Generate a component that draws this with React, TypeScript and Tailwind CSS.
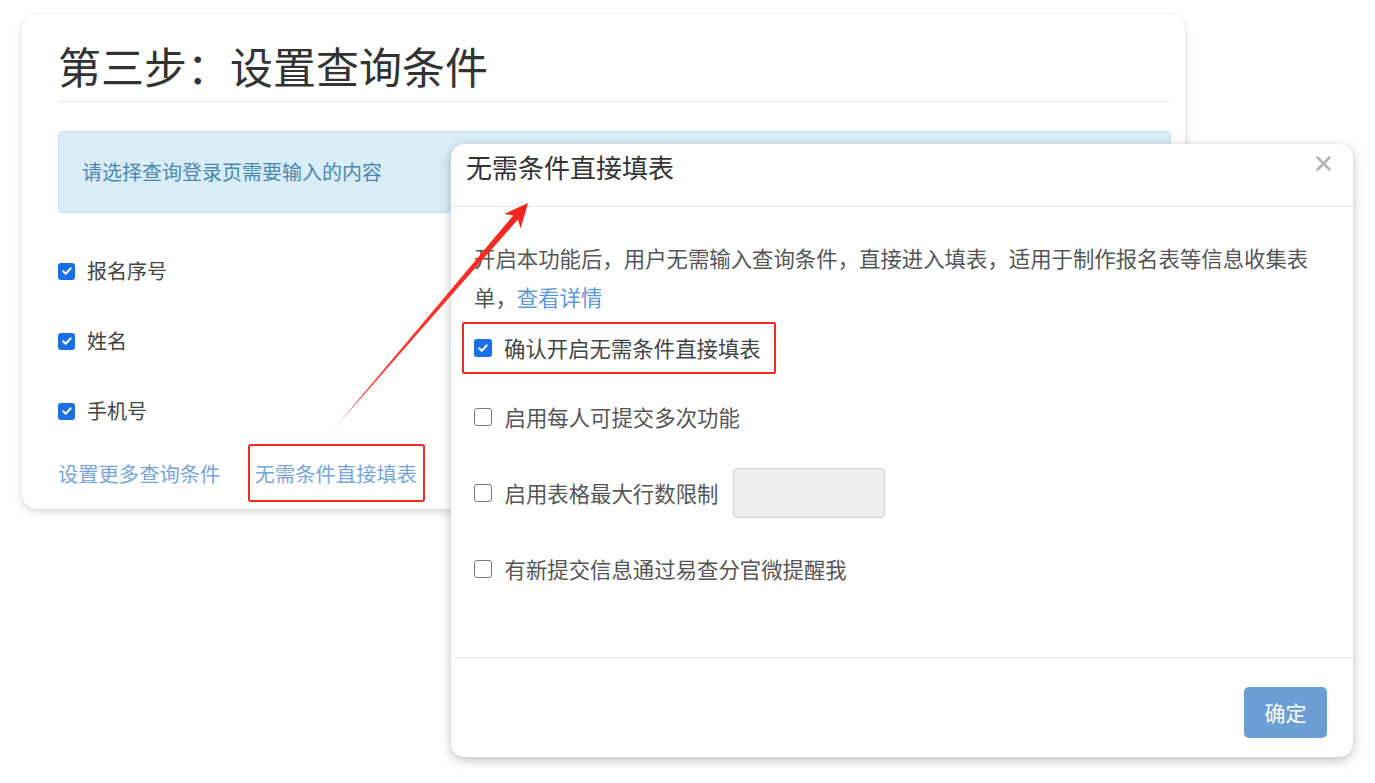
import type { ReactNode } from "react";

function Box({ checked, size = 17 }: { checked?: boolean; size?: number }) {
  const dim = size === 17 ? "h-[17px] w-[17px]" : "h-[18px] w-[18px]";
  if (checked) {
    return (
      <span className={`${dim} flex shrink-0 items-center justify-center rounded-[3px] bg-[#1b6fe4]`}>
        <svg width="12" height="12" viewBox="0 0 12 12" fill="none">
          <path d="M2.2 6.3l2.5 2.5 5-5.4" stroke="white" strokeWidth="2" strokeLinecap="round" strokeLinejoin="round" />
        </svg>
      </span>
    );
  }
  return <span className={`${dim} shrink-0 rounded-[3px] border-[1.5px] border-[#7a7a7a] bg-white`} />;
}

function Field({ label }: { label: string }) {
  return (
    <div className="flex h-[30px] items-center gap-[12px]">
      <Box checked />
      <span className="text-[20px] leading-[30px] text-[#444]">{label}</span>
    </div>
  );
}

function Option({ label, children }: { label: string; children?: ReactNode }) {
  return (
    <div className="flex items-center">
      <Box size={18} />
      <span className="ml-[12.5px] text-[21.4px] leading-[30px] text-[#555]">{label}</span>
      {children}
    </div>
  );
}

function Arrow() {
  return (
    <svg className="pointer-events-none absolute left-0 top-0" width="1375" height="783">
      <defs>
        <linearGradient id="fade" gradientUnits="userSpaceOnUse" x1="327" y1="437" x2="528" y2="203">
          <stop offset="0" stopColor="#f5221b" stopOpacity="0" />
          <stop offset="0.18" stopColor="#f5221b" stopOpacity="0.85" />
          <stop offset="1" stopColor="#f5221b" />
        </linearGradient>
      </defs>
      <polygon
        points="327,437 517.9,219.4 520.7,228.4 528,203 504.1,214 513.3,215.4"
        fill="url(#fade)"
      />
    </svg>
  );
}

export default function App() {
  return (
    <div className="relative h-[783px] w-[1375px] overflow-hidden bg-white font-['Noto_Sans_CJK_SC',sans-serif]">
      <div className="pl-[22px] pt-[14px]">
        <section className="h-[495px] w-[1163px] rounded-[16px] bg-white pl-[36px] pr-[14px] pt-[21px] shadow-[0_3px_10px_rgba(0,0,0,0.16)]">
          <h1 className="text-[43px] leading-[60px] text-[#333]">第三步：设置查询条件</h1>
          <div className="mt-[6px] h-px bg-[#e8e8e8]" />

          <div className="mt-[29px] flex h-[82px] items-center rounded-[4px] border border-[#c5e6f0] bg-[#d9edf7] px-[23px] text-[20px] text-[#4a88ad]">
            请选择查询登录页需要输入的内容
          </div>

          <div className="mt-[43px] flex flex-col gap-[40px]">
            <Field label="报名序号" />
            <Field label="姓名" />
            <Field label="手机号" />
          </div>

          <div className="mt-[18px] flex items-center text-[20.3px] text-[#78a5d8]">
            <span>设置更多查询条件</span>
            <span className="ml-[28px] flex h-[58px] items-center rounded-[3px] border-[2.5px] border-[#ee2a24] pl-[4.5px] pr-[6px]">
              无需条件直接填表
            </span>
          </div>
        </section>
      </div>

      <div className="absolute left-[451px] top-[144px] flex h-[613px] w-[902px] flex-col rounded-[14px] bg-white shadow-[0_3px_12px_rgba(0,0,0,0.26)]">
        <div className="relative h-[63px] shrink-0 border-b border-[#e6e6e6] pl-[15px] pt-[5px]">
          <h2 className="text-[26px] leading-[36px] text-[#333]">无需条件直接填表</h2>
          <svg className="absolute left-[865px] top-[12px]" width="15" height="15" viewBox="0 0 15 15">
            <path d="M1.5 1.5l12 12M13.5 1.5l-12 12" stroke="#b3b3b3" strokeWidth="2.6" strokeLinecap="round" />
          </svg>
        </div>

        <div className="flex flex-1 flex-col items-start pl-[23px] pr-[34px] pt-[31px]">
          <div className="text-[21.4px] leading-[39px] text-[#555]">
            <div>开启本功能后，用户无需输入查询条件，直接进入填表，适用于制作报名表等信息收集表</div>
            <div className="flex">
              <span>单，</span>
              <span className="text-[#5b98d8]">查看详情</span>
            </div>
          </div>

          <div className="ml-[-12px] mt-[5.5px] flex h-[52px] items-center rounded-[2px] border-[2.5px] border-[#ee2a24] pl-[9.5px] pr-[13px]">
            <Box checked size={18} />
            <span className="ml-[12.5px] text-[21.4px] leading-[30px] text-[#444]">确认开启无需条件直接填表</span>
          </div>

          <div className="mt-[28px]">
            <Option label="启用每人可提交多次功能" />
          </div>

          <div className="mt-[36px]">
            <Option label="启用表格最大行数限制">
              <span className="ml-[15px] h-[50px] w-[152px] rounded-[4px] border border-[#cfcfcf] bg-[#eeeeee]" />
            </Option>
          </div>

          <div className="mt-[36px]">
            <Option label="有新提交信息通过易查分官微提醒我" />
          </div>
        </div>

        <div className="flex h-[100px] shrink-0 justify-end border-t border-[#e8e8e8] pr-[26px] pt-[29px]">
          <button
            type="button"
            className="h-[51px] w-[83px] rounded-[5px] bg-[#6b9fd4] text-[21px] text-white"
          >
            确定
          </button>
        </div>
      </div>

      <Arrow />
    </div>
  );
}
